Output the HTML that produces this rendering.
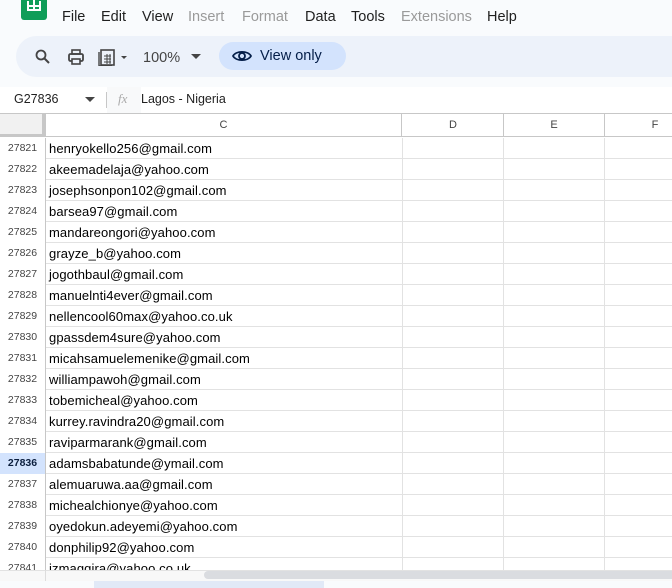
<!DOCTYPE html>
<html style="width:672px;height:588px;overflow:hidden"><head><style>
*{margin:0;padding:0;box-sizing:border-box}
body{width:672px;height:588px;overflow:hidden;background:#f9fbfd;font-family:"Liberation Sans",Arial,sans-serif;position:relative}
.abs{position:absolute}
.menu span{position:absolute;top:9px;font-size:14.5px;color:#1f1f1f}
.menu span.g{color:#9a9a9a}
.tb{left:16px;top:36px;width:656px;height:41px;background:#edf2fa;border-radius:21px 0 0 21px}
.grid{left:0;top:113px;width:672px;height:457px;background:#fff;overflow:hidden}
.row{position:absolute;left:0;width:672px;height:21px;border-bottom:1px solid #e2e2e2}
.rn{position:absolute;left:0;width:46px;height:21px;border-right:1px solid #c7c7c7;font-size:10.5px;color:#444;text-align:center;line-height:20px;background:#fff}
.c{position:absolute;left:49px;font-size:13px;color:#000;line-height:21px;letter-spacing:0.1px}
.vl{position:absolute;top:0;width:1px;height:467px;background:#e2e2e2}
</style></head><body>
<div class="abs" style="left:21px;top:-6px;width:26px;height:26px;background:#0f9d58;border-radius:3px"></div>
<div class="abs" style="left:27px;top:1px;width:14px;height:10px;border:2px solid #fff;border-top:none"></div>
<div class="abs" style="left:27px;top:5px;width:14px;height:2px;background:#fff"></div>
<div class="abs" style="left:33px;top:0;width:2px;height:11px;background:#fff"></div>
<div class="menu">
<span style="left:62px">File</span><span style="left:101px">Edit</span><span style="left:142px">View</span><span class="g" style="left:188px">Insert</span><span class="g" style="left:242px">Format</span><span style="left:305px">Data</span><span style="left:351px">Tools</span><span class="g" style="left:401px">Extensions</span><span style="left:487px">Help</span>
</div>
<div class="abs tb"></div>
<svg class="abs" style="left:34px;top:48px" width="18" height="18" viewBox="0 0 18 18"><circle cx="7" cy="7" r="4.5" fill="none" stroke="#444" stroke-width="1.8"/><path d="M10.5 10.5L15 15" stroke="#444" stroke-width="2"/></svg>
<svg class="abs" style="left:67px;top:48px" width="18" height="18" viewBox="0 0 18 18"><rect x="5" y="2" width="8" height="4" fill="none" stroke="#444" stroke-width="1.6"/><rect x="2" y="6" width="14" height="7" rx="1.5" fill="none" stroke="#444" stroke-width="1.8"/><rect x="5" y="11" width="8" height="5" fill="#edf2fa" stroke="#444" stroke-width="1.6"/></svg>
<svg class="abs" style="left:97px;top:48px" width="34" height="18" viewBox="0 0 34 18"><rect x="4" y="2" width="13" height="15" fill="none" stroke="#444" stroke-width="1.6"/><path d="M2 4v14h13" fill="none" stroke="#444" stroke-width="1.4"/><path d="M7 8h7M7 11h7M7 14h7M10 6v10M13 6v10" stroke="#444" stroke-width="1"/><path d="M24 8l3 3 3-3z" fill="#444"/></svg>
<div class="abs" style="left:143px;top:50px;font-size:14.5px;color:#444">100%</div>
<svg class="abs" style="left:191px;top:54px" width="10" height="6"><path d="M0 0l5 5 5-5z" fill="#444"/></svg>
<div class="abs" style="left:219px;top:42px;width:127px;height:28px;background:#d3e3fd;border-radius:14px"></div>
<svg class="abs" style="left:232px;top:48px" width="20" height="16" viewBox="0 0 20 16"><path d="M1 8C4 2.5 16 2.5 19 8C16 13.5 4 13.5 1 8Z" fill="none" stroke="#041e49" stroke-width="1.8"/><circle cx="10" cy="8" r="3" fill="none" stroke="#041e49" stroke-width="1.8"/></svg>
<div class="abs" style="left:260px;top:48px;font-size:14.5px;color:#041e49">View only</div>
<div class="abs" style="left:0;top:87px;width:672px;height:26px;background:#fff"></div>
<div class="abs" style="left:14px;top:92px;font-size:12.5px;color:#1f1f1f">G27836</div>
<svg class="abs" style="left:85px;top:97px" width="10" height="5"><path d="M0 0l5 5 5-5z" fill="#444"/></svg>
<div class="abs" style="left:106px;top:92px;width:1px;height:16px;background:#c7c7c7"></div>
<div class="abs" style="left:107px;top:87px;width:34px;height:26px;background:#f8f9fa"></div>
<div class="abs" style="left:118px;top:91px;font-size:13px;color:#aaa;font-style:italic;font-family:'Liberation Serif',serif">fx</div>
<div class="abs" style="left:141px;top:92px;font-size:12.5px;color:#1f1f1f">Lagos - Nigeria</div>
<div class="abs grid">
<div class="abs" style="left:0;top:0;width:672px;height:24px;border-top:1px solid #c7c7c7;border-bottom:1px solid #c7c7c7;background:#fff"></div>
<div class="abs" style="left:0;top:1px;width:46px;height:23px;background:#f1f1f1;border-right:4px solid #c7c7c7;border-bottom:3px solid #c7c7c7"></div>
<div class="abs" style="left:46px;top:1px;width:356px;height:23px;text-align:center;font-size:11px;line-height:22px;color:#444;border-right:1px solid #c7c7c7">C</div>
<div class="abs" style="left:403px;top:1px;width:101px;height:23px;text-align:center;font-size:11px;line-height:22px;color:#444;border-right:1px solid #c7c7c7">D</div>
<div class="abs" style="left:504px;top:1px;width:101px;height:23px;text-align:center;font-size:11px;line-height:22px;color:#444;border-right:1px solid #c7c7c7">E</div>
<div class="abs" style="left:605px;top:1px;width:100px;height:23px;text-align:center;font-size:11px;line-height:22px;color:#444">F</div>
<div class="abs" style="left:0;top:25px;width:672px;height:432px;overflow:hidden">
<div class="vl" style="left:402px"></div><div class="vl" style="left:503px"></div><div class="vl" style="left:604px"></div>
<div class="row" style="top:0"><div class="rn">27821</div><div class="c">henryokello256@gmail.com</div></div>
<div class="row" style="top:21px"><div class="rn">27822</div><div class="c">akeemadelaja@yahoo.com</div></div>
<div class="row" style="top:42px"><div class="rn">27823</div><div class="c">josephsonpon102@gmail.com</div></div>
<div class="row" style="top:63px"><div class="rn">27824</div><div class="c">barsea97@gmail.com</div></div>
<div class="row" style="top:84px"><div class="rn">27825</div><div class="c">mandareongori@yahoo.com</div></div>
<div class="row" style="top:105px"><div class="rn">27826</div><div class="c">grayze_b@yahoo.com</div></div>
<div class="row" style="top:126px"><div class="rn">27827</div><div class="c">jogothbaul@gmail.com</div></div>
<div class="row" style="top:147px"><div class="rn">27828</div><div class="c">manuelnti4ever@gmail.com</div></div>
<div class="row" style="top:168px"><div class="rn">27829</div><div class="c">nellencool60max@yahoo.co.uk</div></div>
<div class="row" style="top:189px"><div class="rn">27830</div><div class="c">gpassdem4sure@yahoo.com</div></div>
<div class="row" style="top:210px"><div class="rn">27831</div><div class="c">micahsamuelemenike@gmail.com</div></div>
<div class="row" style="top:231px"><div class="rn">27832</div><div class="c">williampawoh@gmail.com</div></div>
<div class="row" style="top:252px"><div class="rn">27833</div><div class="c">tobemicheal@yahoo.com</div></div>
<div class="row" style="top:273px"><div class="rn">27834</div><div class="c">kurrey.ravindra20@gmail.com</div></div>
<div class="row" style="top:294px"><div class="rn">27835</div><div class="c">raviparmarank@gmail.com</div></div>
<div class="row" style="top:315px"><div class="rn" style="background:#d3e3fd;font-weight:bold;color:#0b1e3d">27836</div><div class="c">adamsbabatunde@ymail.com</div></div>
<div class="row" style="top:336px"><div class="rn">27837</div><div class="c">alemuaruwa.aa@gmail.com</div></div>
<div class="row" style="top:357px"><div class="rn">27838</div><div class="c">michealchionye@yahoo.com</div></div>
<div class="row" style="top:378px"><div class="rn">27839</div><div class="c">oyedokun.adeyemi@yahoo.com</div></div>
<div class="row" style="top:399px"><div class="rn">27840</div><div class="c">donphilip92@yahoo.com</div></div>
<div class="row" style="top:420px"><div class="rn">27841</div><div class="c">izmaggira@yahoo.co.uk</div></div>
</div>
</div>
<div class="abs" style="left:0;top:570px;width:672px;height:11px;background:#f8f8f8;border-top:1px solid #e2e2e2"></div>
<div class="abs" style="left:45px;top:570px;width:1px;height:11px;background:#ddd"></div>
<div class="abs" style="left:204px;top:571px;width:468px;height:8px;background:#dadce0;border-radius:4px 0 0 4px"></div>
<div class="abs" style="left:0;top:581px;width:672px;height:7px;background:#f9fbfd"></div>
<div class="abs" style="left:94px;top:581px;width:230px;height:7px;background:#e1e9f7"></div>
</body></html>
